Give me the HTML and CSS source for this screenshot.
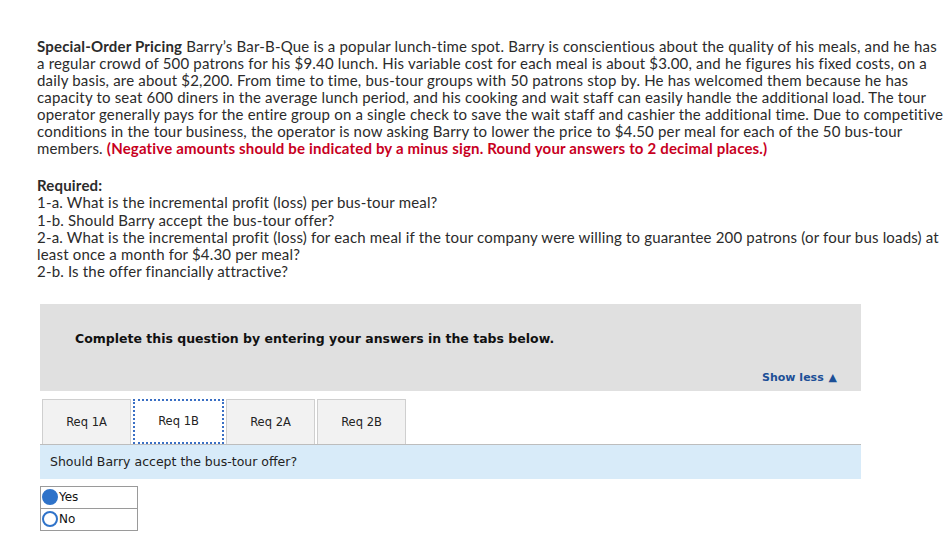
FILE: index.html
```html
<!DOCTYPE html>
<html>
<head>
<meta charset="utf-8">
<link rel="stylesheet" href="styles.css">
</head>
<body>
<main class="page">
  <p class="intro">
    <b>Special-Order Pricing</b> Barry’s Bar-B-Que is a popular lunch-time spot. Barry is conscientious about the quality of his meals, and he has<br>
    a regular crowd of 500 patrons for his $9.40 lunch. His variable cost for each meal is about $3.00, and he figures his fixed costs, on a<br>
    daily basis, are about $2,200. From time to time, bus-tour groups with 50 patrons stop by. He has welcomed them because he has<br>
    capacity to seat 600 diners in the average lunch period, and his cooking and wait staff can easily handle the additional load. The tour<br>
    operator generally pays for the entire group on a single check to save the wait staff and cashier the additional time. Due to competitive<br>
    conditions in the tour business, the operator is now asking Barry to lower the price to $4.50 per meal for each of the 50 bus-tour<br>
    members. <b class="warn">(Negative amounts should be indicated by a minus sign. Round your answers to 2 decimal places.)</b>
  </p>
  <div class="required">
    <b>Required:</b><br>
    1-a. What is the incremental profit (loss) per bus-tour meal?<br>
    1-b. Should Barry accept the bus-tour offer?<br>
    2-a. What is the incremental profit (loss) for each meal if the tour company were willing to guarantee 200 patrons (or four bus loads) at<br>
    least once a month for $4.30 per meal?<br>
    2-b. Is the offer financially attractive?
  </div>

  <section class="panel">
    <div class="panel-head">
      <div class="panel-title">Complete this question by entering your answers in the tabs below.</div>
      <div class="show-less">Show less <span class="tri">▲</span></div>
    </div>
    <div class="tabs">
      <div class="tab">Req 1A</div>
      <div class="tab active">Req 1B</div>
      <div class="tab">Req 2A</div>
      <div class="tab">Req 2B</div>
    </div>
    <div class="prompt">Should Barry accept the bus-tour offer?</div>
    <div class="choices">
      <div class="choice"><span class="radio on"></span>Yes</div>
      <div class="choice"><span class="radio"></span>No</div>
    </div>
  </section>
</main>
</body>
</html>
```
FILE: styles.css
```css
html, body {
  margin: 0;
  padding: 0;
  background: #fff;
}
.page {
  padding: 38px 0 0 37px;
  font-family: Lato, "Open Sans", sans-serif;
  color: #2b2b2b;
}
.intro {
  margin: 0;
  font-size: 15px;
  letter-spacing: 0.18px;
  line-height: 17px;
  white-space: nowrap;
}
.intro b {
  font-weight: 700;
}
.warn {
  color: #c8001e;
}
.required {
  margin-top: 20px;
  font-size: 15px;
  letter-spacing: 0.18px;
  line-height: 17.3px;
  white-space: nowrap;
}
.panel {
  width: 821px;
  margin: 23px 0 0 3px;
  font-family: "DejaVu Sans", Verdana, sans-serif;
}
.panel-head {
  background: #e0e0e0;
  height: 87px;
  display: flex;
  flex-direction: column;
  padding: 0 24px 0 35px;
  box-sizing: border-box;
}
.panel-title {
  margin-top: 27px;
  font-size: 12.5px;
  font-weight: bold;
  color: #111;
}
.show-less {
  margin-top: 25px;
  align-self: flex-end;
  font-size: 11px;
  font-weight: bold;
  color: #1c4f97;
}
.tri {
  font-size: 11px;
  margin-left: 1px;
}
.tabs {
  display: flex;
  gap: 2px;
  margin-top: 8px;
  padding-left: 2px;
  border-bottom: 1px solid #bdbdbd;
}
.tab {
  width: 89px;
  height: 45px;
  box-sizing: border-box;
  background: #f2f2f2;
  border: 1px solid #cfcfcf;
  border-bottom: none;
  display: flex;
  align-items: center;
  justify-content: center;
  font-size: 11.5px;
  color: #222;
}
.tab.active {
  background: #fff;
  border: 2px dotted #3a6fc4;
  border-bottom: 2px dotted #3a6fc4;
  width: 91px;
}
.prompt {
  background: #d8ebf9;
  height: 34px;
  display: flex;
  align-items: center;
  padding-left: 10px;
  font-size: 12.5px;
  color: #222;
}
.choices {
  margin-top: 7px;
  width: 96px;
  border: 1px solid #9a9a9a;
  font-family: "DejaVu Sans", Verdana, sans-serif;
}
.choice {
  height: 21px;
  display: flex;
  align-items: center;
  font-size: 12px;
  color: #111;
}
.choice + .choice {
  border-top: 1px solid #9a9a9a;
}
.radio {
  width: 16px;
  height: 16px;
  border-radius: 50%;
  box-sizing: border-box;
  border: 2px solid #2f73c9;
  margin: 0 1px 0 1px;
}
.radio.on {
  background: #2f73c9;
}
```
